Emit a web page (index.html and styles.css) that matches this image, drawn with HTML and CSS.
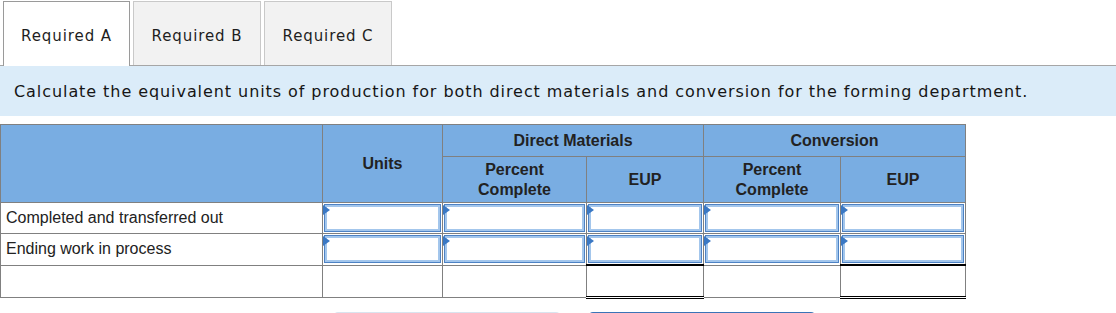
FILE: index.html
```html
<!DOCTYPE html>
<html lang="en">
<head>
<meta charset="utf-8">
<title>Equivalent units</title>
<link rel="stylesheet" href="styles.css">
</head>
<body>
<div class="tabs">
  <div class="tab active">Required A</div>
  <div class="tab">Required B</div>
  <div class="tab">Required C</div>
</div>
<div class="banner">Calculate the equivalent units of production for both direct materials and conversion for the forming department.</div>
<table class="grid">
  <colgroup>
    <col class="c-label"><col class="c-units"><col class="c-dmp"><col class="c-dme"><col class="c-cvp"><col class="c-cve">
  </colgroup>
  <thead>
    <tr class="h1">
      <th rowspan="2"></th>
      <th rowspan="2">Units</th>
      <th colspan="2">Direct Materials</th>
      <th colspan="2">Conversion</th>
    </tr>
    <tr class="h2">
      <th>Percent<br>Complete</th>
      <th>EUP</th>
      <th>Percent<br>Complete</th>
      <th>EUP</th>
    </tr>
  </thead>
  <tbody>
    <tr class="r">
      <td class="label">Completed and transferred out</td>
      <td class="in"><div class="box"></div></td>
      <td class="in"><div class="box"></div></td>
      <td class="in"><div class="box"></div></td>
      <td class="in"><div class="box"></div></td>
      <td class="in"><div class="box"></div></td>
    </tr>
    <tr class="r">
      <td class="label">Ending work in process</td>
      <td class="in"><div class="box"></div></td>
      <td class="in"><div class="box"></div></td>
      <td class="in"><div class="box"></div></td>
      <td class="in"><div class="box"></div></td>
      <td class="in"><div class="box"></div></td>
    </tr>
    <tr class="r total">
      <td></td>
      <td></td>
      <td></td>
      <td class="sum"></td>
      <td></td>
      <td class="sum"></td>
    </tr>
  </tbody>
</table>
<div class="buttons">
  <div class="btn prev"></div>
  <div class="btn next"></div>
</div>
</body>
</html>
```

FILE: styles.css
```css
html, body {
  margin: 0;
  padding: 0;
  background: #fff;
  overflow: hidden;
}
body {
  width: 1116px;
  height: 313px;
  font-family: "DejaVu Sans", Verdana, sans-serif;
  color: #1a1a1a;
}
.tabs {
  display: flex;
  gap: 3px;
  padding: 1px 0 0 3px;
  border-bottom: 1px solid #a6a6a6;
  height: 64px;
}
.tab {
  width: 125px;
  height: 64px;
  box-sizing: border-box;
  border: 1px solid #c9c9c9;
  border-bottom: none;
  background: #f2f2f2;
  display: flex;
  align-items: center;
  justify-content: center;
  font-size: 15px;
  letter-spacing: 0.9px;
  color: #1e1e1e;
  padding-top: 4px;
}
.tab.active {
  width: 127px;
  background: #fff;
  border-color: #9a9a9a;
  height: 65px;
  margin-bottom: -1px;
  position: relative;
}
.tab:nth-child(2) { width: 128px; }
.tab:nth-child(3) { width: 128px; }
.banner {
  background: #dbecf9;
  height: 50px;
  box-sizing: border-box;
  padding: 16px 0 0 14px;
  font-size: 16px;
  letter-spacing: 0.93px;
  color: #161616;
}
.grid {
  margin-top: 8px;
  border-collapse: collapse;
  table-layout: fixed;
  width: 965px;
  font-family: "Liberation Sans", Arial, sans-serif;
  font-size: 16px;
}
.c-label { width: 322px; }
.c-units { width: 120px; }
.c-dmp { width: 144px; }
.c-dme { width: 117px; }
.c-cvp { width: 137px; }
.c-cve { width: 125px; }
.grid th, .grid td {
  border: 1px solid #808080;
  padding: 0;
}
.grid th {
  background: #79ade2;
  color: #222;
  font-weight: bold;
  text-align: center;
  line-height: 20px;
}
.h1 th { height: 31px; }
.h2 th { height: 45px; }
.label {
  padding-left: 5px !important;
  color: #222;
  vertical-align: middle;
  line-height: 18px;
}
.in {
  padding: 1px !important;
  vertical-align: top;
}
.r td { height: 28px; }
.box {
  position: relative;
  box-sizing: border-box;
  height: 28px;
  border: 1px solid #4d82c4;
  box-shadow: inset 0 0 0 2px #a3c6ec;
  background: #fff;
}
.box::before {
  content: "";
  position: absolute;
  left: -2px;
  top: 0;
  width: 0;
  height: 0;
  border-top: 5px solid transparent;
  border-bottom: 5px solid transparent;
  border-left: 7px solid #3a78c4;
}
.total td { height: 30px; }
.total td.sum {
  border-top: 2px solid #000;
  border-bottom: 3px double #000;
}
.buttons {
  display: flex;
  padding-left: 333px;
  gap: 27px;
  margin-top: 13px;
}
.btn {
  width: 228px;
  height: 30px;
  border-radius: 5px;
}
.prev { background: #d9e4ef; }
.next { background: #3a74b7; }
```
